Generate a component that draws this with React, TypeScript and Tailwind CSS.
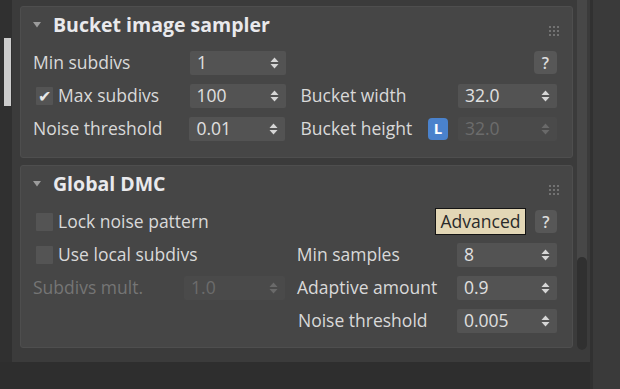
import type { ReactNode } from 'react'

const font = { fontFamily: '"Open Sans", "Noto Sans", sans-serif' }

function Arrows({ dim }: { dim?: boolean }) {
  const c = dim ? '#6a6a6a' : '#d6d6d6'
  return (
    <svg width="9" height="12" viewBox="0 0 9 12" className="shrink-0">
      <path d="M4.5 0.5 L8.5 5 L0.5 5 Z" fill={c} />
      <path d="M0.5 7 L8.5 7 L4.5 11.5 Z" fill={c} />
    </svg>
  )
}

function Spinner({ value, width, disabled }: { value: string; width: string; disabled?: boolean }) {
  return (
    <div
      className={`${width} flex h-[24px] shrink-0 items-center justify-between rounded-[2px] pr-[7px] pl-[7px] ${
        disabled ? 'bg-[#4a4a4a] text-[#6c6c6c]' : 'bg-[#535353] text-[#e0e0e0]'
      }`}
    >
      <span className="leading-none">{value}</span>
      <Arrows dim={disabled} />
    </div>
  )
}

function Check({ checked }: { checked?: boolean }) {
  return (
    <div className="mr-[5px] flex h-[18px] w-[17px] shrink-0 items-center justify-center rounded-[1px] bg-[#545454] text-[16px] leading-none text-[#e8e8e8]">
      {checked ? '✔' : ''}
    </div>
  )
}

function Help({ size }: { size: string }) {
  return (
    <div
      className={`${size} flex shrink-0 items-center justify-center rounded-[4px] bg-[#575757] text-[16px] font-semibold text-[#dcdcdc]`}
    >
      ?
    </div>
  )
}

function Grip() {
  return (
    <div className="mt-[11px] grid grid-cols-3 gap-[2px] self-start">
      {Array.from({ length: 9 }).map((_, i) => (
        <div key={i} className="h-[2px] w-[2px] bg-[#727272]" />
      ))}
    </div>
  )
}

function Panel({ title, height, children }: { title: string; height: string; children: ReactNode }) {
  return (
    <div className={`${height} flex w-[553px] flex-col rounded-[3px] border border-[#4e4e4e] bg-[#464646]`}>
      <div className="flex h-[36px] shrink-0 items-center pr-[13px] pl-[12px]">
        <svg width="8" height="6" viewBox="0 0 8 6" className="mr-[12px]">
          <path d="M0 0 L8 0 L4 5.5 Z" fill="#9c9c9c" />
        </svg>
        <span className="text-[19.5px] font-bold text-[#e9e9ec]">{title}</span>
        <div className="ml-auto">
          <Grip />
        </div>
      </div>
      <div className="flex flex-col pt-[3px]">{children}</div>
    </div>
  )
}

function Row({ children }: { children: ReactNode }) {
  return <div className="flex h-[33px] items-center pr-[15px] pl-[12px]">{children}</div>
}

export default function App() {
  return (
    <div className="flex h-[389px] w-[620px] overflow-hidden bg-[#383838] text-[17.5px] text-[#d9d9d9]" style={font}>
      <div className="flex w-[590px] flex-col">
        <div className="flex h-[362px] bg-[#3b3b3b]">
          <div className="flex w-[12px] bg-[#303030] pl-[4px]">
            <div className="mt-[38px] h-[68px] w-[7px] bg-[#cdcdcd]" />
          </div>
          <div className="flex w-[561px] flex-col gap-[7px] pt-[6px] pl-[8px]">
            <Panel title="Bucket image sampler" height="h-[152px]">
              <Row>
                <span className="w-[157px]">Min subdivs</span>
                <Spinner value="1" width="w-[96px]" />
                <div className="ml-auto">
                  <Help size="h-[23px] w-[23px]" />
                </div>
              </Row>
              <Row>
                <div className="flex w-[157px] items-center pl-[3px]">
                  <Check checked />
                  <span>Max subdivs</span>
                </div>
                <Spinner value="100" width="w-[96px]" />
                <span className="ml-[15px] w-[158px]">Bucket width</span>
                <Spinner value="32.0" width="w-[99px]" />
              </Row>
              <Row>
                <span className="w-[157px]">Noise threshold</span>
                <Spinner value="0.01" width="w-[96px]" />
                <span className="ml-[15px] w-[128px]">Bucket height</span>
                <div className="mr-[10px] flex h-[22px] w-[20px] items-center justify-center rounded-[4px] bg-[#4a82cc] text-[15px] font-bold text-white">
                  L
                </div>
                <Spinner value="32.0" width="w-[99px]" disabled />
              </Row>
            </Panel>
            <Panel title="Global DMC" height="h-[183px]">
              <Row>
                <div className="flex items-center pl-[3px]">
                  <Check />
                  <span>Lock noise pattern</span>
                </div>
                <div className="ml-auto flex items-center gap-[9px]">
                  <div className="flex h-[27px] w-[91px] items-center justify-center border border-[#141414] bg-[#e3d7b6] text-[#2a2a2a]">
                    Advanced
                  </div>
                  <Help size="h-[23px] w-[22px]" />
                </div>
              </Row>
              <Row>
                <div className="flex w-[265px] items-center pl-[3px]">
                  <Check />
                  <span>Use local subdivs</span>
                </div>
                <span className="w-[161px]">Min samples</span>
                <Spinner value="8" width="w-[100px]" />
              </Row>
              <Row>
                <span className="w-[152px] text-[#757575]">Subdivs mult.</span>
                <Spinner value="1.0" width="w-[101px]" disabled />
                <span className="ml-[12px] w-[161px]">Adaptive amount</span>
                <Spinner value="0.9" width="w-[100px]" />
              </Row>
              <Row>
                <span className="ml-[265px] w-[161px]">Noise threshold</span>
                <Spinner value="0.005" width="w-[100px]" />
              </Row>
            </Panel>
          </div>
          <div className="flex w-[17px] flex-col pl-[4px]">
            <div className="flex h-[350px] w-[10px] flex-col rounded-b-[5px] bg-[#474747]">
              <div className="mt-auto h-[93px] w-[10px] rounded-[5px] bg-[#303030]" />
            </div>
          </div>
        </div>
        <div className="h-[27px] bg-[#2e2e2e]" />
      </div>
      <div className="w-[30px] border-l-[3px] border-[#313131] bg-[#3a3a3a]" />
    </div>
  )
}
